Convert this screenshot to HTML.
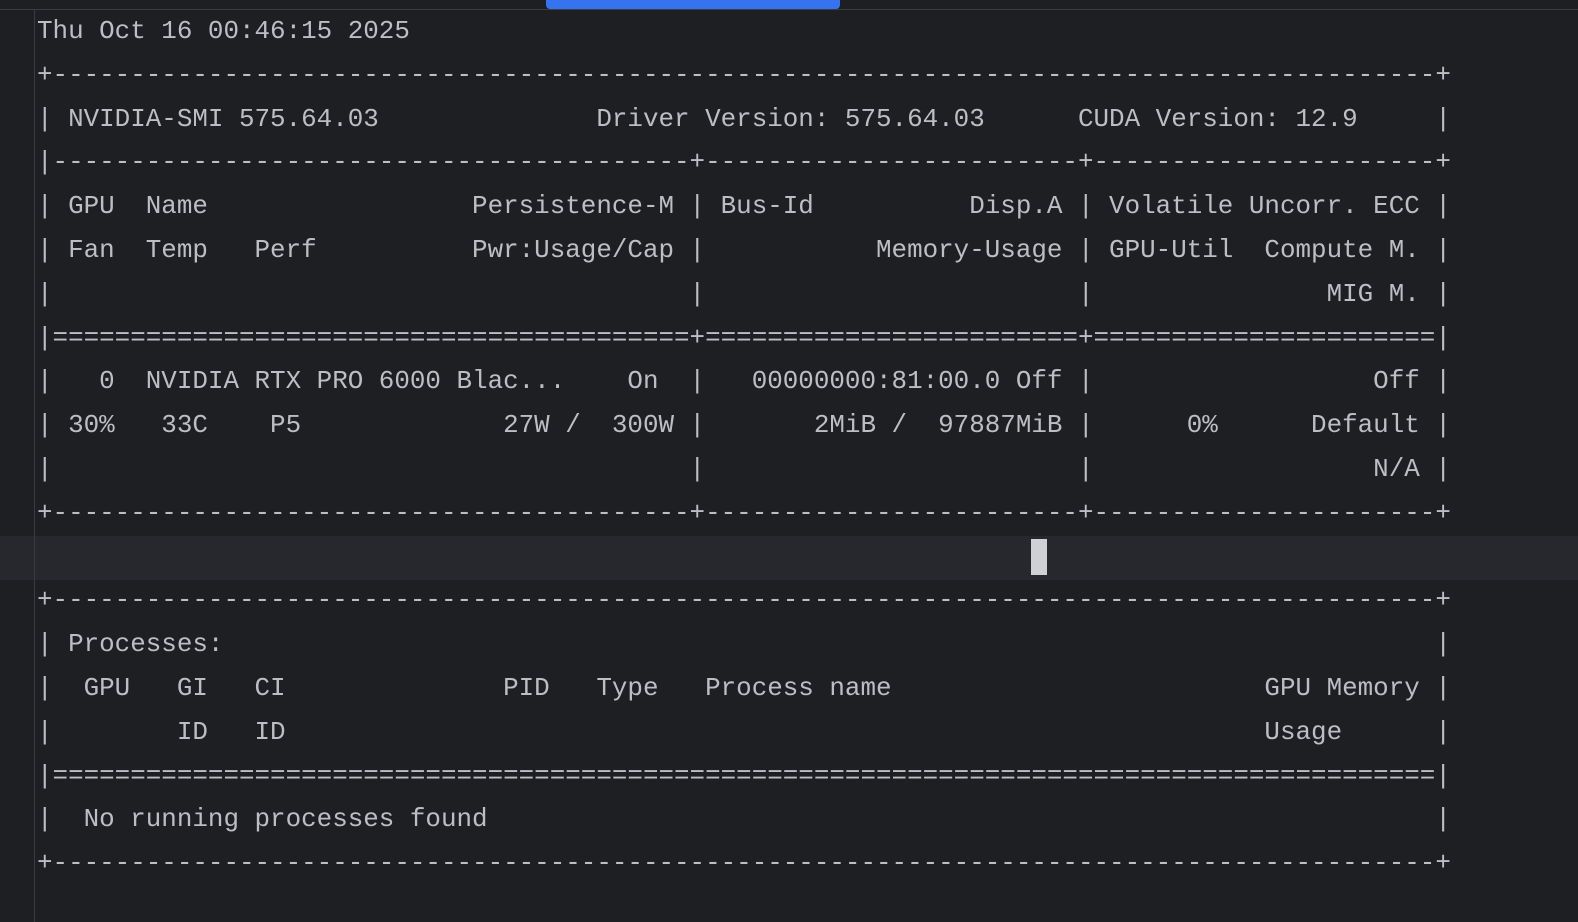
<!DOCTYPE html>
<html><head><meta charset="utf-8"><style>
html,body{margin:0;padding:0;background:#1e1f22;width:1578px;height:922px;overflow:hidden;position:relative}
.top{position:absolute;left:0;top:0;width:1578px;height:9px;background:#1e1f22;border-bottom:1px solid #393b40}
.blue{position:absolute;left:546px;top:0;width:294px;height:9px;background:#3574f0;border-radius:0 0 4px 4px}
.gut{position:absolute;left:34px;top:10px;width:1px;height:912px;background:#393b40}
.cur{position:absolute;left:0;top:536px;width:1578px;height:44px;background:#26282d}
.caret{position:absolute;left:1031px;top:539px;width:16px;height:36px;background:#ced0d6}
pre{position:absolute;left:37px;top:10px;margin:0;font-family:"Liberation Mono",monospace;font-size:25.9px;line-height:43.8px;color:#bcbec4;letter-spacing:0}
</style></head><body>
<div class="top"></div><div class="blue"></div>
<div class="cur"></div><div class="gut"></div>
<pre>Thu Oct 16 00:46:15 2025
+-----------------------------------------------------------------------------------------+
| NVIDIA-SMI 575.64.03              Driver Version: 575.64.03      CUDA Version: 12.9     |
|-----------------------------------------+------------------------+----------------------+
| GPU  Name                 Persistence-M | Bus-Id          Disp.A | Volatile Uncorr. ECC |
| Fan  Temp   Perf          Pwr:Usage/Cap |           Memory-Usage | GPU-Util  Compute M. |
|                                         |                        |               MIG M. |
|=========================================+========================+======================|
|   0  NVIDIA RTX PRO 6000 Blac...    On  |   00000000:81:00.0 Off |                  Off |
| 30%   33C    P5             27W /  300W |       2MiB /  97887MiB |      0%      Default |
|                                         |                        |                  N/A |
+-----------------------------------------+------------------------+----------------------+

+-----------------------------------------------------------------------------------------+
| Processes:                                                                              |
|  GPU   GI   CI              PID   Type   Process name                        GPU Memory |
|        ID   ID                                                               Usage      |
|=========================================================================================|
|  No running processes found                                                             |
+-----------------------------------------------------------------------------------------+
</pre>
<div class="caret"></div>
</body></html>
